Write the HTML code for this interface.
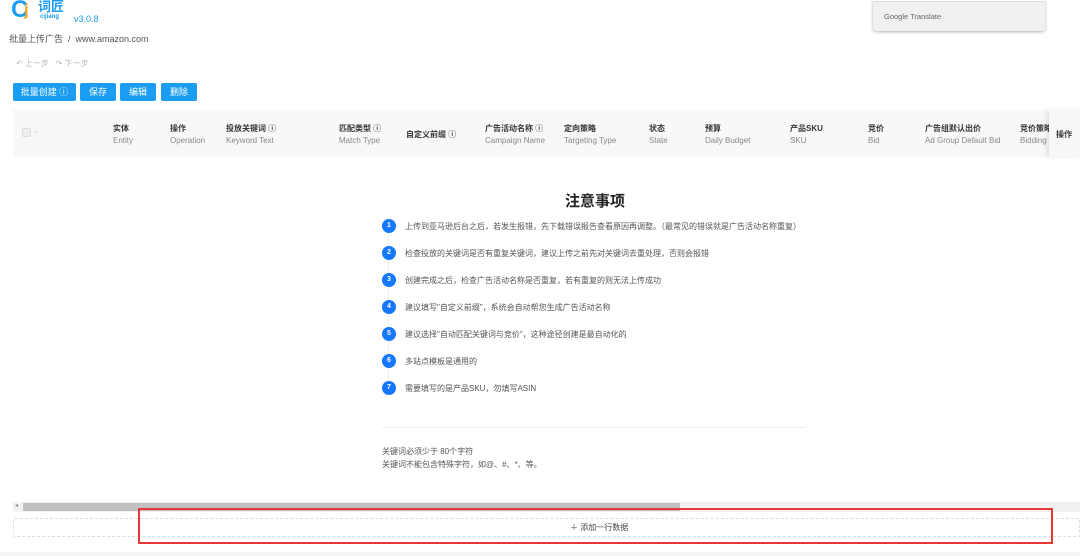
<!DOCTYPE html><html><head><meta charset="utf-8"><style>
*{margin:0;padding:0;box-sizing:border-box}
body{width:1080px;height:556px;overflow:hidden;background:#fff;font-family:"Liberation Sans","Noto Sans CJK SC",sans-serif;position:relative;color:#333}
.a{position:absolute;white-space:nowrap}
.btn{position:absolute;top:83px;height:18px;background:#1a9df2;color:#fff;font-size:9px;line-height:18px;text-align:center;border-radius:2px}
.h1{font-size:8px;font-weight:bold;color:#333;top:123px}
.h2{font-size:8px;color:#888;top:136px}
.c{position:absolute;left:382px;width:14px;height:14px;border-radius:50%;background:#1677ff;color:#fff;font-size:7px;font-weight:bold;text-align:center;line-height:14px}
.t{position:absolute;left:405px;font-size:8px;color:#555;white-space:nowrap}
</style></head><body>
<div class="a" style="left:11px;top:-4px;font-size:24px;font-weight:bold;color:#1a9df2">C</div>
<div class="a" style="left:24px;top:0px;font-size:17px;font-weight:bold;color:#f7a21b">j</div>
<div class="a" style="left:38px;top:-1px;font-size:13px;line-height:15px;font-weight:bold;color:#1a9df2">词匠</div>
<div class="a" style="left:40px;top:14px;font-size:6px;line-height:7px;font-weight:bold;color:#1a9df2">cijiang</div>
<div class="a" style="left:74px;top:14px;font-size:9px;color:#1a9df2">v3.0.8</div>
<div class="a" style="left:9px;top:32px;font-size:9px;color:#555">批量上传广告 &nbsp;/ &nbsp;www.amazon.com</div>
<div class="a" style="left:16px;top:58px;font-size:8px;color:#bbb">↶ 上一步 &nbsp;&nbsp;↷ 下一步</div>
<div class="btn" style="left:13px;width:63px">批量创建 ⓘ</div>
<div class="btn" style="left:80px;width:36px">保存</div>
<div class="btn" style="left:120px;width:36px">编辑</div>
<div class="btn" style="left:161px;width:36px">删除</div>
<div class="a" style="left:13px;top:110px;width:1067px;height:47px;background:#f7f8fa"></div>
<div class="a" style="left:22px;top:128px;width:9px;height:9px;border:1px solid #ddd;background:#eee;border-radius:2px"></div>
<div class="a" style="left:33px;top:126px;font-size:8px;color:#ccc">⌄</div>
<div class="a h1" style="left:113px">实体</div><div class="a h2" style="left:113px">Entity</div>
<div class="a h1" style="left:170px">操作</div><div class="a h2" style="left:170px">Operation</div>
<div class="a h1" style="left:226px">投放关键词 ⓘ</div><div class="a h2" style="left:226px">Keyword Text</div>
<div class="a h1" style="left:339px">匹配类型 ⓘ</div><div class="a h2" style="left:339px">Match Type</div>
<div class="a h1" style="left:406px;top:129px">自定义前缀 ⓘ</div>
<div class="a h1" style="left:485px">广告活动名称 ⓘ</div><div class="a h2" style="left:485px">Campaign Name</div>
<div class="a h1" style="left:564px">定向策略</div><div class="a h2" style="left:564px">Targeting Type</div>
<div class="a h1" style="left:649px">状态</div><div class="a h2" style="left:649px">State</div>
<div class="a h1" style="left:705px">预算</div><div class="a h2" style="left:705px">Daily Budget</div>
<div class="a h1" style="left:790px">产品SKU</div><div class="a h2" style="left:790px">SKU</div>
<div class="a h1" style="left:868px">竞价</div><div class="a h2" style="left:868px">Bid</div>
<div class="a h1" style="left:925px">广告组默认出价</div><div class="a h2" style="left:925px">Ad Group Default Bid</div>
<div class="a h1" style="left:1020px">竞价策略</div><div class="a h2" style="left:1020px">Bidding</div>
<div class="a" style="left:1049px;top:110px;width:31px;height:47px;background:#f7f8fa;box-shadow:-3px 0 4px rgba(0,0,0,.08)"></div>
<div class="a h1" style="left:1056px;top:129px">操作</div>
<div class="a" style="left:0;top:190px;width:1190px;text-align:center;font-size:15px;font-weight:bold;color:#222">注意事项</div>
<div class="a" style="left:388px;top:226px;width:1px;height:162px;background:#eee"></div>
<div class="c" style="top:219px">1</div><div class="t" style="top:221px">上传到亚马逊后台之后，若发生报错，先下载错误报告查看原因再调整。（最常见的错误就是广告活动名称重复）</div>
<div class="c" style="top:246px">2</div><div class="t" style="top:248px">检查投放的关键词是否有重复关键词，建议上传之前先对关键词去重处理，否则会报错</div>
<div class="c" style="top:273px">3</div><div class="t" style="top:275px">创建完成之后，检查广告活动名称是否重复，若有重复的则无法上传成功</div>
<div class="c" style="top:300px">4</div><div class="t" style="top:302px">建议填写"自定义前缀"，系统会自动帮您生成广告活动名称</div>
<div class="c" style="top:327px">5</div><div class="t" style="top:329px">建议选择"自动匹配关键词与竞价"，这种途径创建是最自动化的</div>
<div class="c" style="top:354px">6</div><div class="t" style="top:356px">多站点模板是通用的</div>
<div class="c" style="top:381px">7</div><div class="t" style="top:383px">需要填写的是产品SKU，勿填写ASIN</div>
<div class="a" style="left:382px;top:427px;width:424px;height:1px;background:#eee"></div>
<div class="a" style="left:382px;top:446px;font-size:8px;color:#555">关键词必须少于 80个字符</div>
<div class="a" style="left:382px;top:459px;font-size:8px;color:#555">关键词不能包含特殊字符，如@、#、*、等。</div>
<div class="a" style="left:13px;top:502px;width:1067px;height:10px;background:#f1f1f1"></div>
<div class="a" style="left:23px;top:503px;width:657px;height:8px;background:#c1c1c1"></div>
<div class="a" style="left:15px;top:502px;font-size:6px;color:#888">◂</div>
<div class="a" style="left:13px;top:518px;width:1067px;height:19px;border:1px dashed #ddd;border-radius:2px"></div>
<div class="a" style="left:570px;top:522px;font-size:8px;color:#444">＋ 添加一行数据</div>
<div class="a" style="left:138px;top:508px;width:915px;height:36px;border:2px solid #e53935"></div>
<div class="a" style="left:0;top:552px;width:1080px;height:4px;background:#f5f5f5"></div>
<div class="a" style="left:873px;top:0;width:172px;height:31px;background:#f1f1f1;border-radius:0 0 3px 3px;box-shadow:0 1px 3px rgba(0,0,0,.3)"></div>
<div class="a" style="left:873px;top:0;width:172px;height:2px;background:#fff;border-bottom:1px solid #ddd"></div>
<div class="a" style="left:884px;top:12px;font-size:7.5px;color:#666">Google Translate</div>
</body></html>
